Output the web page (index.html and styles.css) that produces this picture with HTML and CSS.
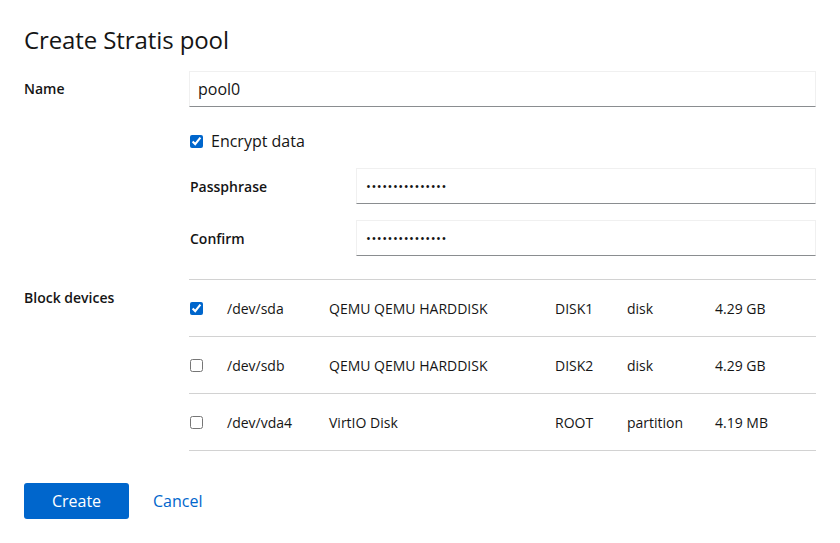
FILE: index.html
```html
<!DOCTYPE html>
<html lang="en">
<head>
<meta charset="utf-8">
<title>Create Stratis pool</title>
<link rel="stylesheet" href="styles.css">
</head>
<body>
<div class="modal">
  <h1 class="title">Create Stratis pool</h1>
  <form class="form">
    <label class="label" for="name">Name</label>
    <div class="field">
      <input class="input" id="name" type="text" value="pool0">
    </div>

    <div class="label"></div>
    <div class="field encrypt-group">
      <label class="check">
        <input type="checkbox" class="cb" checked>
        <span>Encrypt data</span>
      </label>
      <div class="sub-form">
        <label class="label" for="pass">Passphrase</label>
        <input class="input" id="pass" type="password" value="aaaaaaaaaaaaaaa">
        <label class="label" for="confirm">Confirm</label>
        <input class="input" id="confirm" type="password" value="aaaaaaaaaaaaaaa">
      </div>
    </div>

    <div class="label">Block devices</div>
    <div class="field">
      <table class="devices">
        <colgroup>
          <col class="c-check"><col class="c-dev"><col class="c-model"><col class="c-label"><col class="c-type"><col class="c-size">
        </colgroup>
        <tbody>
          <tr>
            <td><input type="checkbox" class="cb" checked></td>
            <td>/dev/sda</td><td>QEMU QEMU HARDDISK</td><td>DISK1</td><td>disk</td><td>4.29 GB</td>
          </tr>
          <tr>
            <td><input type="checkbox" class="cb"></td>
            <td>/dev/sdb</td><td>QEMU QEMU HARDDISK</td><td>DISK2</td><td>disk</td><td>4.29 GB</td>
          </tr>
          <tr>
            <td><input type="checkbox" class="cb"></td>
            <td>/dev/vda4</td><td>VirtIO Disk</td><td>ROOT</td><td>partition</td><td>4.19 MB</td>
          </tr>
        </tbody>
      </table>
    </div>
  </form>
  <div class="actions">
    <button class="btn btn-primary" type="button">Create</button>
    <button class="btn btn-link" type="button">Cancel</button>
  </div>
</div>
</body>
</html>
```
FILE: styles.css
```css
* { box-sizing: border-box; }
html, body { margin: 0; background: #fff; }
body {
  font-family: "Open Sans", "Noto Sans", sans-serif;
  color: #151515;
  font-size: 14px;
}
.modal {
  padding: 24px 24px 24px 24px;
}
.title {
  margin: 0 0 15px 0;
  font-size: 24px;
  line-height: 32px;
  font-weight: 400;
  letter-spacing: -0.1px;
}
.form {
  display: grid;
  grid-template-columns: 165px 1fr;
  row-gap: 24px;
}
.label {
  font-weight: 600;
  font-size: 14px;
  line-height: 21px;
  padding-top: 7px;
}
.field { min-width: 0; }
.input {
  display: block;
  width: 100%;
  height: 36px;
  margin: 0;
  padding: 5px 8px;
  font-family: inherit;
  font-size: 16px;
  color: #151515;
  background: #fff;
  border: 1px solid #f0f0f0;
  border-bottom-color: #8a8d90;
  border-radius: 0;
  outline: none;
}
input[type="password"] {
  font-size: 13px;
  letter-spacing: 0.5px;
  padding-left: 9px;
}
.encrypt-group {
  display: flex;
  flex-direction: column;
  gap: 16px;
}
.check {
  display: flex;
  align-items: center;
  gap: 8px;
  font-size: 16px;
  line-height: 21px;
  padding-left: 1px;
}
.cb {
  width: 13px;
  height: 13px;
  margin: 0;
  accent-color: #0066cc;
}
.sub-form {
  display: grid;
  grid-template-columns: 166px 1fr;
  row-gap: 16px;
  padding-left: 1px;
}
.sub-form .label { padding-top: 8px; }
.devices {
  width: 100%;
  border-collapse: collapse;
  table-layout: fixed;
  border-top: 1px solid #d2d2d2;
  margin-top: -1px;
}
.devices td {
  height: 57px;
  padding: 0;
  border-bottom: 1px solid #d2d2d2;
  vertical-align: middle;
  font-size: 14px;
  white-space: nowrap;
}
.devices td:first-child { padding-left: 1px; }
.devices td:first-child .cb { display: block; }
.c-check { width: 38px; }
.c-dev { width: 102px; }
.c-model { width: 226px; }
.c-label { width: 72px; }
.c-type { width: 88px; }
.actions {
  display: flex;
  gap: 8px;
  margin-top: 32px;
}
.btn {
  font-family: inherit;
  font-size: 16px;
  line-height: 24px;
  padding: 6px 16px;
  border: 0;
  border-radius: 3px;
  cursor: pointer;
}
.btn-primary {
  background: #0066cc;
  color: #fff;
  width: 105px;
}
.btn-link {
  background: transparent;
  color: #0066cc;
}
```
